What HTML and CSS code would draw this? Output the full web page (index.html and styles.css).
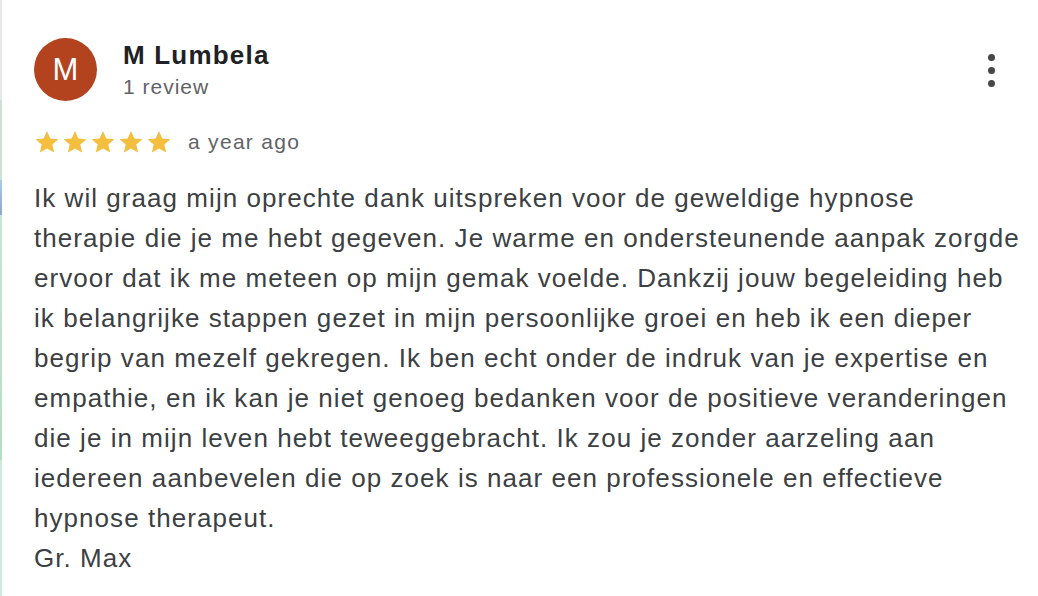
FILE: index.html
```html
<!DOCTYPE html>
<html>
<head>
<meta charset="utf-8">
<link rel="stylesheet" href="styles.css">
</head>
<body>
<div class="page">
  <div class="edge"></div>
  <div class="review">
    <div class="header">
      <div class="avatar">M</div>
      <div class="who">
        <div class="name">M Lumbela</div>
        <div class="count">1 review</div>
      </div>
      <div class="more" aria-label="More">
        <span class="dot"></span><span class="dot"></span><span class="dot"></span>
      </div>
    </div>
    <div class="meta">
      <div class="stars">
        <svg viewBox="0 0 24 24" class="star"><path d="M12 1.8l3.1 6.9 7.4.7-5.6 5 1.7 7.4L12 17.9l-6.6 3.9 1.7-7.4-5.6-5 7.4-.7z"/></svg>
        <svg viewBox="0 0 24 24" class="star"><path d="M12 1.8l3.1 6.9 7.4.7-5.6 5 1.7 7.4L12 17.9l-6.6 3.9 1.7-7.4-5.6-5 7.4-.7z"/></svg>
        <svg viewBox="0 0 24 24" class="star"><path d="M12 1.8l3.1 6.9 7.4.7-5.6 5 1.7 7.4L12 17.9l-6.6 3.9 1.7-7.4-5.6-5 7.4-.7z"/></svg>
        <svg viewBox="0 0 24 24" class="star"><path d="M12 1.8l3.1 6.9 7.4.7-5.6 5 1.7 7.4L12 17.9l-6.6 3.9 1.7-7.4-5.6-5 7.4-.7z"/></svg>
        <svg viewBox="0 0 24 24" class="star"><path d="M12 1.8l3.1 6.9 7.4.7-5.6 5 1.7 7.4L12 17.9l-6.6 3.9 1.7-7.4-5.6-5 7.4-.7z"/></svg>
      </div>
      <span class="when">a year ago</span>
    </div>
    <div class="text">Ik wil graag mijn oprechte dank uitspreken voor de geweldige hypnose therapie die je me hebt gegeven. Je warme en ondersteunende aanpak zorgde ervoor dat ik me meteen op mijn gemak voelde. Dankzij jouw begeleiding heb ik belangrijke stappen gezet in mijn persoonlijke groei en heb ik een dieper begrip van mezelf gekregen. Ik ben echt onder de indruk van je expertise en empathie, en ik kan je niet genoeg bedanken voor de positieve veranderingen die je in mijn leven hebt teweeggebracht. Ik zou je zonder aarzeling aan iedereen aanbevelen die op zoek is naar een professionele en effectieve hypnose therapeut.<br>Gr. Max</div>
  </div>
</div>
</body>
</html>
```

FILE: styles.css
```css
html, body {
  margin: 0;
  padding: 0;
  background: #ffffff;
}
body {
  font-family: "Liberation Sans", Arial, Helvetica, sans-serif;
  width: 1038px;
  height: 596px;
  overflow: hidden;
}
.page {
  display: flex;
  height: 596px;
}
.edge {
  width: 2px;
  flex: none;
  background: linear-gradient(to bottom, #e6e6e6 0, #e6e6e6 100px, #c9e4d3 100px, #c9e4d3 180px, #a9cbe3 180px, #8fa7c8 215px, #c7e6d6 215px, #b5dcc6 460px, #cde9dc 460px, #cde9dc 596px);
}
.review {
  flex: 1;
  padding: 38px 0 0 32px;
}
.header {
  display: flex;
  align-items: flex-start;
}
.avatar {
  width: 63px;
  height: 63px;
  border-radius: 50%;
  background: #b3421f;
  color: #ffffff;
  font-size: 31px;
  letter-spacing: 0;
  line-height: 63px;
  text-align: center;
  flex: none;
}
.who {
  margin-left: 26px;
  margin-top: 2px;
  flex: 1;
}
.name {
  font-size: 26px;
  font-weight: bold;
  letter-spacing: 1.2px;
  color: #202124;
  line-height: 30px;
}
.count {
  font-size: 21px;
  letter-spacing: 1px;
  color: #5f6368;
  line-height: 30px;
  margin-top: 2px;
}
.more {
  display: flex;
  flex-direction: column;
  gap: 6px;
  margin: 16px 43px 0 0;
}
.dot {
  width: 7px;
  height: 7px;
  border-radius: 50%;
  background: #444746;
}
.meta {
  display: flex;
  align-items: center;
  margin-top: 23px;
  height: 34px;
}
.stars {
  display: flex;
  gap: 2px;
}
.star {
  width: 26px;
  height: 26px;
  fill: #f4be3e;
}
.when {
  margin-left: 16px;
  font-size: 21px;
  letter-spacing: 1.3px;
  color: #5f6368;
}
.text {
  margin-top: 19px;
  width: 988px;
  font-size: 26px;
  letter-spacing: 1.05px;
  line-height: 40px;
  color: #3c4043;
}
```
